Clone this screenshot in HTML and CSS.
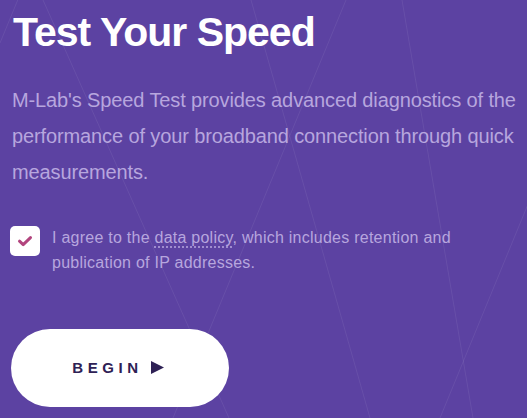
FILE: index.html
```html
<!DOCTYPE html>
<html lang="en">
<head>
<meta charset="utf-8">
<title>Test Your Speed</title>
<link rel="stylesheet" href="styles.css">
</head>
<body>
<svg class="bg-lines" width="527" height="418" viewBox="0 0 527 418" aria-hidden="true">
  <g stroke="#ffffff" stroke-opacity="0.07" stroke-width="1" fill="none">
    <line x1="43" y1="0" x2="229" y2="418"/>
    <line x1="346" y1="0" x2="173" y2="418"/>
    <line x1="251" y1="0" x2="370" y2="418"/>
    <line x1="402" y1="0" x2="473" y2="418"/>
    <line x1="612" y1="0" x2="440" y2="418"/>
    <line x1="26" y1="-20" x2="0" y2="43"/>
  </g>
</svg>
<main class="hero">
  <h1 class="title">Test Your Speed</h1>
  <p class="intro">M-Lab's Speed Test provides advanced diagnostics of the performance of your broadband connection through quick measurements.</p>
  <label class="agree">
    <span class="box">
      <svg width="16" height="12" viewBox="0 0 16 12"><path d="M2.5 6.2 L6.2 9.6 L13.5 2.6" stroke="#b2457e" stroke-width="3" fill="none" stroke-linecap="round" stroke-linejoin="round"/></svg>
    </span>
    <span class="agree-text">I agree to the <a class="policy" href="#">data policy</a>, which includes retention and publication of IP addresses.</span>
  </label>
  <button class="begin" type="button"><span class="begin-label">BEGIN</span><svg class="play" width="13" height="13" viewBox="0 0 13 13"><path d="M0 0 L13 6.5 L0 13 Z" fill="#2e2155"/></svg></button>
</main>
</body>
</html>
```
FILE: styles.css
```css
html, body {
  margin: 0;
  padding: 0;
  height: 100%;
}
body {
  background: #5c42a2;
  font-family: "Liberation Sans", Arial, sans-serif;
  overflow: hidden;
  position: relative;
}
.bg-lines {
  position: absolute;
  left: 0;
  top: 0;
  z-index: 0;
}
.hero {
  position: relative;
  z-index: 1;
  padding: 7px 4px 0 12px;
  display: flex;
  flex-direction: column;
  align-items: flex-start;
}
.title {
  margin: 0 0 0 1px;
  font-size: 41px;
  line-height: 50px;
  font-weight: 700;
  letter-spacing: -1px;
  color: #ffffff;
}
.intro {
  margin: 25px 0 0 0;
  font-size: 20px;
  line-height: 36px;
  letter-spacing: -0.12px;
  color: #b7a6de;
}
.agree {
  margin-top: 35px;
  margin-left: -2px;
  display: flex;
  align-items: flex-start;
  gap: 12px;
}
.box {
  width: 30px;
  height: 30px;
  flex: none;
  margin-top: 1px;
  background: #ffffff;
  border-radius: 5px;
  display: flex;
  align-items: center;
  justify-content: center;
}
.agree-text {
  font-size: 16px;
  line-height: 25px;
  letter-spacing: 0.25px;
  color: #b7a6de;
}
.policy {
  color: inherit;
  text-decoration: underline dotted #b7a6de;
  text-underline-offset: 4px;
}
.begin {
  margin-top: 54px;
  margin-left: -1px;
  width: 218px;
  height: 78px;
  border: none;
  border-radius: 39px;
  background: #ffffff;
  display: flex;
  align-items: center;
  justify-content: center;
  gap: 8px;
  padding: 0 4px 2px 0;
  font-family: "Liberation Sans", Arial, sans-serif;
  font-weight: 700;
  font-size: 15px;
  letter-spacing: 4.6px;
  color: #2e2155;
  cursor: pointer;
}
.play {
  display: block;
}
```
